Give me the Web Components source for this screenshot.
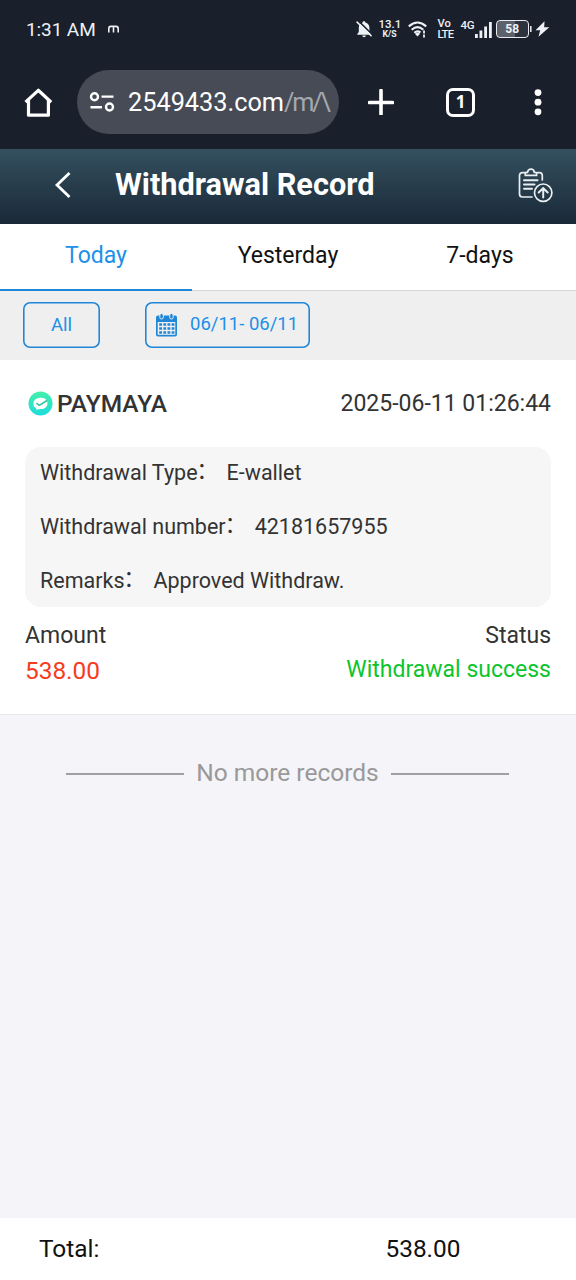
<!DOCTYPE html>
<html lang="en">
<head>
<meta charset="utf-8">
<title>Withdrawal Record</title>
<style>
html,body{margin:0;height:100%}
body{font-family:Roboto,"Noto Sans CJK SC",sans-serif;background:#f4f4f9;color:#333}
</style>
</head>
<body>
<record-app></record-app>
<script>
function define(name, html) {
  const t = document.createElement('template');
  t.innerHTML = html;
  customElements.define(name, class extends HTMLElement {
    constructor() {
      super();
      this.attachShadow({ mode: 'open' }).appendChild(t.content.cloneNode(true));
    }
  });
}

define('status-bar', `
<style>
:host{display:flex;height:58px;box-sizing:border-box;padding:0 26px 0 26px;align-items:center;background:#191f2b;color:#eef1f5}
svg{display:block;flex:none}
.time{font-size:19px;line-height:24px;letter-spacing:-.1px;white-space:nowrap;padding-top:1px}
.m{margin-left:12px}
.right{display:flex;align-items:center;margin-left:auto}
.two{font-size:11.500px;line-height:11px;font-weight:500;text-align:center;display:flex;flex-direction:column;white-space:nowrap}
.two.left{text-align:left;font-size:11.200px}
.two small{font-size:8.700px;line-height:9px;font-weight:700}
.sig{display:flex;align-items:flex-start;margin-left:7px}
.sig span{font-size:11.500px;line-height:11px;font-weight:500;width:14px;white-space:nowrap;letter-spacing:-.3px}
.bat{display:flex;align-items:center;justify-content:center;margin-left:4px;width:33.500px;height:18px;box-sizing:border-box;border:1.500px solid #e8ebef;border-radius:4px;font-size:12px;font-weight:700;background:linear-gradient(90deg,#5c616b 58%,#2d333e 58%)}
</style>
<span class="time">1:31 AM</span>
<svg class="m" width="11" height="8" viewBox="0 0 11 8" fill="none" stroke="#eef1f5" stroke-width="1.6"><path d="M.8 7.500V3.800Q.8 1.400 2.800 1.400H8Q10.200 1.400 10.200 3.800V7.500M5.500 1.400V7.500"/></svg>
<div class="right">
<svg width="17" height="18" viewBox="0 0 17 18"><path fill="#eef1f5" d="M8 1.200c.9 0 1.300.5 1.400 1.200 2.700.7 4 2.600 4 5.200v4L15 14v.7H1.300V14l1.500-2V7.600c0-2.600 1.200-4.500 3.800-5.200C6.700 1.700 7.100 1.200 8 1.200zM6.300 15.600h3.600c-.2 1.200-.8 1.700-1.800 1.700s-1.600-.5-1.800-1.700z"/><path d="M2.200.6L17 15.200" stroke="#191f2b" stroke-width="1.500"/><path d="M.6 1.600L15.600 16.300" stroke="#eef1f5" stroke-width="1.500"/></svg>
<div class="two" style="margin-left:6px;width:22px"><span>13.1</span><small>K/S</small></div>
<svg style="margin-left:7px" width="20" height="17" viewBox="0 0 20 17" fill="none" stroke="#eef1f5" stroke-width="2.100"><path d="M.8 5.400Q9.500-2.400 18.200 5.400M3.700 8.700Q9.500 3.500 15.300 8.700M6.300 11.700Q9.500 9 12.500 11.500"/><path d="M9.500 15.500l-2.600-2.800q2.600-2 5.200 0z" fill="#eef1f5" stroke="none"/><path d="M16 9.500v3M16 13.500v3" stroke-width="1.800"/></svg>
<div class="two left" style="margin-left:10px;width:19px"><span>Vo</span><span style="letter-spacing:-.6px">LTE</span></div>
<div class="sig" style="margin-left:4px"><span>4G</span><svg width="17" height="19" viewBox="0 0 17 19" fill="#eef1f5"><rect x="0" y="14" width="2.800" height="4"/><rect x="4.500" y="10.500" width="2.800" height="7.500"/><rect x="9.200" y="6.500" width="2.800" height="11.500"/><rect x="14" y="2" width="2.800" height="16"/></svg></div>
<div class="bat">58</div>
<svg width="3" height="8" viewBox="0 0 3 8"><path d="M1.800 1v6" stroke="#eef1f5" stroke-width="1.500"/></svg>
<svg style="margin-left:3px" width="15" height="16" viewBox="0 0 15 16"><path fill="#eef1f5" d="M9.500.3L.5 9.300h4.700L3.500 15.700 14.300 6.200H9.200z"/></svg>
</div>`);

define('browser-bar', `
<style>
:host{display:flex;align-items:center;height:91px;box-sizing:border-box;padding:0 34px 3px 22px;background:#191f2b;color:#fff}
svg{display:block;flex:none}
.url{display:flex;align-items:center;width:262px;height:64px;border-radius:32px;background:#474b55;margin-left:23px;box-sizing:border-box;padding-left:12px;flex:none}
.txt{margin:2px 0 0 13px;width:204px;white-space:nowrap;font-size:25.300px;line-height:36px}
.txt i{font-style:normal;color:#a5a8af;letter-spacing:-2.200px}
.tab{width:29px;height:29px;box-sizing:border-box;border:3px solid #fff;border-radius:7px;display:flex;align-items:center;justify-content:center;font:700 17px/20px "Open Sans",sans-serif;margin-left:52px;flex:none}
</style>
<svg width="32" height="32" viewBox="0 0 32 32" fill="none" stroke="#fff" stroke-width="3.200" stroke-linejoin="round"><path d="M3.500 16.200L16.300 4.300 29.200 16.200"/><path d="M6.500 14V29.200H26.400V14"/></svg>
<div class="url"><svg width="26" height="20" viewBox="0 0 26 20" fill="none" stroke="#fff" stroke-width="2.400"><circle cx="5.500" cy="4.800" r="3.500"/><path d="M12.500 4.600H24.500M1.500 15.300H13"/><circle cx="20.500" cy="15" r="3.500"/></svg><div class="txt">2549433.com<i>/m/\\</i></div></div>
<svg style="margin-left:29px" width="26" height="26" viewBox="0 0 26 26"><path d="M13 1.500V25.500M1.500 13.500H24.500" stroke="#fff" stroke-width="3.600" stroke-linecap="round"/></svg>
<div class="tab">1</div>
<svg style="margin-left:auto" width="8" height="28" viewBox="0 0 8 28" fill="#fff"><circle cx="4" cy="4.600" r="3.400"/><circle cx="4" cy="14.200" r="3.400"/><circle cx="4" cy="23.800" r="3.400"/></svg>`);

define('page-header', `
<style>
:host{display:flex;align-items:center;height:75px;box-sizing:border-box;padding:0 23px 3px 53px;background:linear-gradient(#34505f,#1a2938);color:#fff}
svg{display:block;flex:none}
h1{margin:0 0 0 44px;font-size:30.700px;line-height:40px;font-weight:700;white-space:nowrap}
</style>
<svg width="18" height="28" viewBox="0 0 18 28" fill="none" stroke="#fff" stroke-width="2.800"><path d="M16.500 2L4 14 16.500 26"/></svg>
<h1><slot></slot></h1>
<svg style="margin:1px 0 0 auto" width="35" height="35" viewBox="0 0 35 35" fill="none" stroke="#e9eef1" stroke-width="1.700" stroke-linecap="round"><path d="M7.500 4.600H4.500Q1.500 4.600 1.500 7.600V26Q1.500 29 4.500 29H14M19 4.600H21.500Q24.300 4.600 24.300 7.600V12"/><path d="M7.300 7.300V5.500Q7.300 4.300 8.600 4.300H9.500Q10 1.200 13 1.200T16.300 4.300H17.300Q18.600 4.300 18.600 5.500V7.300Z"/><path d="M6 12.300H19.500M6 16.600H16.500M6 20.700H14" stroke-width="2"/><circle cx="25.200" cy="24.700" r="8.700"/><path d="M25.200 29.500V20.500M20.700 24.500L25.200 20.200 29.700 24.500" stroke-width="2"/></svg>`);

define('date-tabs', `
<style>
:host{display:grid;grid-template-columns:repeat(3,1fr);height:67px;background:#fff;color:#111;text-align:center;font-size:23px;line-height:64px}
span{box-sizing:border-box;height:67px;border-bottom:1px solid #d5d5d5}
.on{color:#2090e8;border-bottom:2px solid #2087d8}
</style>
<span class="on">Today</span><span>Yesterday</span><span>7-days</span>`);

define('filter-row', `
<style>
:host{display:flex;align-items:flex-start;height:69px;box-sizing:border-box;padding:10.500px 23px 0;background:#efefef;color:#2090e8;font-size:18.500px}
div{box-sizing:border-box;height:46.500px;box-shadow:inset 0 0 0 1.600px #2087d8;border-radius:7px;display:flex;align-items:center;white-space:nowrap}
.all{width:77px;justify-content:center;padding-top:1px}
.date{width:165px;margin-left:45px;padding-left:10px}
.date span{margin:0 0 1px 12px}
</style>
<div class="all">All</div>
<div class="date"><svg width="23" height="24" viewBox="0 0 23 24"><path fill="#2087d8" d="M3 2.500H20Q22 2.500 22 4.500V21.500Q22 23.500 20 23.500H3Q1 23.500 1 21.500V4.500Q1 2.500 3 2.500z"/><path fill="#efefef" d="M2.700 9H20.300V21.800H2.700z"/><g stroke="#efefef" stroke-width="1" fill="#2087d8"><rect x="4.800" y=".5" width="3.500" height="5.500" rx="1.700"/><rect x="14.700" y=".5" width="3.500" height="5.500" rx="1.700"/></g><path d="M4.200 11.500H19.500M4.200 15.500H19.500M4.200 19.500H19.500" stroke="#2087d8" stroke-width="2.600" stroke-dasharray="2.800 1.350"/></svg><span>06/11- 06/11</span></div>`);

define('detail-line', `
<style>
:host{display:flex;align-items:center;height:54px;font-size:21.500px;line-height:30px;white-space:nowrap}
.c{transform:translate(-1px,-2px)}
.v{margin-left:7.500px}
</style>
<span><slot name="label"></slot></span><span class="c">：</span><span class="v"><slot></slot></span>`);

define('record-card', `
<style>
:host{display:block;height:355px;box-sizing:border-box;padding:27px 25px 0;background:#fff;border-bottom:1px solid #e8e8eb}
.row{display:flex;justify-content:space-between;align-items:center;white-space:nowrap}
.top{height:32px;font-size:23px}
.brand{display:flex;align-items:center;font-weight:500;font-size:24.500px}
.brand svg{margin:1px 4px 0 3px}
.box{margin-top:27.500px;height:160px;box-sizing:border-box;padding:0 15px;border-radius:16px;background:#f6f6f6}
.box detail-line{margin-top:-1px;margin-bottom:1px}
.lab{font-size:23px;height:30px;margin-top:14px}
.val{font-size:24.400px;height:36px;margin-top:2px}
.red{color:#f63c20}.green{color:#0cc52d;font-size:23px;margin-bottom:3px}
.box{display:flow-root}
</style>
<div class="row top"><span class="brand"><svg width="25" height="25" viewBox="0 0 25 25"><defs><linearGradient id="g" x1="0" y1="0" x2="0" y2="1"><stop stop-color="#43efa9"/><stop offset="1" stop-color="#1edcdc"/></linearGradient></defs><circle cx="12.500" cy="12.500" r="12" fill="url(#g)"/><path fill="#fff" d="M12.500 6.700C16.900 6.700 19.500 8.700 19.500 12.200S16.800 18 12.500 18L8.500 18.800 7.800 17.100C5.900 16.200 5.400 14.600 5.400 12.700 5.400 8.900 8.500 6.700 12.500 6.700z"/><path d="M8.500 12.200L11.200 14.300 19 9.500" fill="none" stroke="#22c99e" stroke-width="1.500"/></svg>PAYMAYA</span><span>2025-06-11 01:26:44</span></div>
<div class="box">
<detail-line><span slot="label">Withdrawal Type</span>E-wallet</detail-line>
<detail-line><span slot="label">Withdrawal number</span>42181657955</detail-line>
<detail-line><span slot="label">Remarks</span>Approved Withdraw.</detail-line>
</div>
<div class="row lab"><span>Amount</span><span>Status</span></div>
<div class="row val"><span class="red">538.00</span><span class="green">Withdrawal success</span></div>`);

define('list-end', `
<style>
:host{display:flex;justify-content:center;align-items:center;gap:12px;height:32px;margin-top:41px;padding-right:1px;color:#999;font-size:24.500px;white-space:nowrap}
i{width:118px;height:2px;background:#a0a0a4;margin-top:3px}
</style>
<i></i><span><slot></slot></span><i></i>`);

define('total-bar', `
<style>
:host{display:grid;grid-template-columns:346.500px 1fr;align-items:center;height:62px;box-sizing:border-box;padding:0 0 1px 39px;background:#fff;color:#111;font-size:24.400px;margin-top:auto}
</style>
<span>Total:</span><span>538.00</span>`);

define('record-app', `
<style>
:host{display:flex;flex-direction:column;height:1280px;overflow:hidden}
:host>*{flex:none}
</style>
<status-bar></status-bar>
<browser-bar></browser-bar>
<page-header>Withdrawal Record</page-header>
<date-tabs></date-tabs>
<filter-row></filter-row>
<record-card></record-card>
<list-end>No more records</list-end>
<total-bar></total-bar>`);
</script>
</body>
</html>
